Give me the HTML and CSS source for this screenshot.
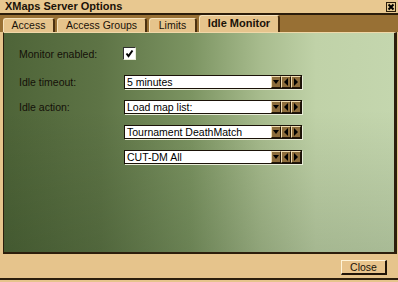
FILE: index.html
```html
<!DOCTYPE html>
<html lang="en">
<head>
  <meta charset="UTF-8" />
  <title>XMaps Server Options</title>
  <link rel="stylesheet" href="styles.css">
</head>
<body>

<div class="window">
  <div class="titlebar">
    <span class="title">XMaps Server Options</span>
    <span class="close-x">
      <svg width="10" height="10" viewBox="0 0 10 10">
        <rect x="0.5" y="0.5" width="9" height="9" fill="#e4c890" stroke="#2a1c0a"/>
        <path d="M2.5 2.5L7.5 7.5M7.5 2.5L2.5 7.5" stroke="#000" stroke-width="2"/>
      </svg>
    </span>
  </div>

  <div class="tabbar">
    <div class="tab tab-access">Access</div>
    <div class="tab tab-groups">Access Groups</div>
    <div class="tab tab-limits">Limits</div>
    <div class="tab tab-idle active">Idle Monitor</div>
  </div>

  <div class="panel">
    <div class="form">
      <div class="row first">
        <div class="label">Monitor enabled:</div>
        <div class="checkbox">
          <svg width="11" height="11" viewBox="0 0 11 11">
            <path d="M2.5 5.5L4.5 8L8.5 2.5" fill="none" stroke="#000" stroke-width="2"/>
          </svg>
        </div>
      </div>
      <div class="row">
        <div class="label">Idle timeout:</div>
        <div class="combo">
          <span class="combo-text">5 minutes</span>
          <span class="cbtn down"></span><span class="cbtn left"></span><span class="cbtn right"></span>
        </div>
      </div>
      <div class="row">
        <div class="label">Idle action:</div>
        <div class="combo">
          <span class="combo-text">Load map list:</span>
          <span class="cbtn down"></span><span class="cbtn left"></span><span class="cbtn right"></span>
        </div>
      </div>
      <div class="row">
        <div class="label"></div>
        <div class="combo">
          <span class="combo-text">Tournament DeathMatch</span>
          <span class="cbtn down"></span><span class="cbtn left"></span><span class="cbtn right"></span>
        </div>
      </div>
      <div class="row">
        <div class="label"></div>
        <div class="combo">
          <span class="combo-text">CUT-DM All</span>
          <span class="cbtn down"></span><span class="cbtn left"></span><span class="cbtn right"></span>
        </div>
      </div>
    </div>
  </div>

  <div class="footer">
    <button class="btn">Close</button>
  </div>
</div>

</body>
</html>
```

FILE: styles.css
```css
body {
  margin: 0;
  background: #e4c088;
}

.window {
  width: 398px;
  height: 282px;
  box-sizing: border-box;
  background: #e6c48c;
  font-family: "Liberation Sans", Arial, sans-serif;
  font-size: 10px;
  color: #1a1208;
  display: flex;
  flex-direction: column;
}

.titlebar {
  height: 13px;
  flex: none;
  display: flex;
  align-items: center;
  justify-content: space-between;
  padding: 0 2px 0 5px;
  background: #e8c890;
  border-bottom: 2px solid #2a1c0a;
}

.title {
  font-weight: bold;
  font-size: 11px;
  line-height: 13px;
}

.close-x svg {
  display: block;
}

.tabbar {
  height: 17px;
  flex: none;
  display: flex;
  align-items: flex-end;
  gap: 2px;
  padding-left: 3px;
  background: #987034;
}

.tab {
  height: 14px;
  box-sizing: border-box;
  text-align: center;
  background: #e6c48c;
  border: 1px solid #f6e2bc;
  border-right: 2px solid #4a3010;
  border-bottom: none;
  border-radius: 3px 3px 0 0;
  line-height: 13px;
  font-size: 10.5px;
}

.tab-access { width: 52px; }
.tab-groups { width: 90px; }
.tab-limits { width: 48px; }
.tab-idle { width: 81px; }

.tab.active {
  height: 17px;
  font-weight: bold;
  font-size: 11px;
  line-height: 15px;
}

.panel {
  height: 222px;
  flex: none;
  box-sizing: border-box;
  margin: 0 1px 0 3px;
  padding: 14px 0 0 15px;
  border-top: 1px solid #f0d8a8;
  border-left: 1px solid #2c1e0c;
  border-right: 3px solid #2c1e0c;
  border-bottom: 2px solid #2c1e0c;
  background:
    linear-gradient(to bottom, rgba(0, 0, 0, 0) 35%, rgba(0, 20, 0, 0.14) 100%),
    linear-gradient(to right, #4e6438 0%, #5e7446 25%, #7c9462 48%, #a8bc8e 66%, #c0d2a8 80%, #c4d6ae 100%);
}

.form {
  display: flex;
  flex-direction: column;
  gap: 11px;
}

.row {
  height: 14px;
  display: flex;
  align-items: center;
}

.row.first {
  height: 13px;
  margin-bottom: 4px;
}

.label {
  width: 105px;
  flex: none;
  color: #141008;
  font-size: 10.5px;
}

.checkbox {
  width: 13px;
  height: 13px;
  box-sizing: border-box;
  margin-left: -1px;
  background: #fff;
  border: 1px solid;
  border-color: #303030 #e8ecd8 #e8ecd8 #303030;
}

.checkbox svg {
  display: block;
}

.combo {
  width: 178px;
  height: 14px;
  box-sizing: border-box;
  display: flex;
  align-items: center;
  background: #fff;
  border: 1px solid #1a1208;
  box-shadow: 1px 1px 0 #e8ecd8;
}

.combo-text {
  flex: 1;
  padding-left: 2px;
  line-height: 12px;
  color: #000;
  font-size: 10.5px;
}

.cbtn {
  width: 10px;
  height: 12px;
  box-sizing: border-box;
  display: flex;
  align-items: center;
  justify-content: center;
  background: #8c6c3c;
  border: 1px solid;
  border-color: #f0dcb0 #201408 #201408 #f0dcb0;
}

.cbtn::after {
  content: "";
  width: 0;
  height: 0;
}

.cbtn.down::after {
  border-left: 3px solid transparent;
  border-right: 3px solid transparent;
  border-top: 4px solid #000;
}

.cbtn.left::after {
  border-top: 4px solid transparent;
  border-bottom: 4px solid transparent;
  border-right: 4px solid #000;
}

.cbtn.right::after {
  border-top: 4px solid transparent;
  border-bottom: 4px solid transparent;
  border-left: 4px solid #000;
}

.footer {
  flex: 1;
  display: flex;
  justify-content: flex-end;
  align-items: flex-start;
  padding: 6px 11px 0 0;
  margin-bottom: 2px;
  border-bottom: 2px solid #2c1e0c;
}

.btn {
  width: 46px;
  height: 15px;
  box-sizing: border-box;
  padding: 0;
  background: #e8c48c;
  border: 1px solid;
  border-color: #fff4d8 #201408 #201408 #fff4d8;
  border-right-width: 2px;
  border-bottom-width: 2px;
  font-family: "Liberation Sans", Arial, sans-serif;
  font-size: 10.5px;
  line-height: 12px;
  color: #1a1208;
}
```
